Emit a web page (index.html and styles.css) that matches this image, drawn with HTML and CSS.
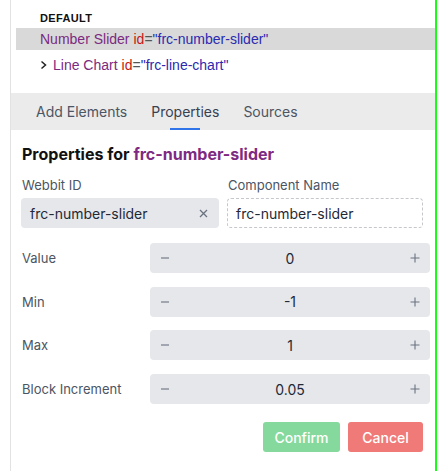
FILE: index.html
```html
<!DOCTYPE html>
<html>
<head>
<meta charset="utf-8">
<link rel="stylesheet" href="styles.css">
</head>
<body>
<div class="frame">
  <div class="panel">
    <div class="tree">
      <div class="tree-row cut"><span class="tag">Root Layout</span> <span class="attr">id</span><span class="eq">=</span><span class="val">"grid"</span></div>
      <div class="tree-heading">DEFAULT</div>
      <div class="tree-row selected"><span class="tag">Number Slider</span> <span class="attr">id</span><span class="eq">=</span><span class="val">"frc-number-slider"</span></div>
      <div class="tree-row child"><svg class="chev" width="8" height="10" viewBox="0 0 8 10"><path d="M1.5 1.5 L5.5 5 L1.5 8.5" fill="none" stroke="#222" stroke-width="1.5"/></svg><span class="tag">Line Chart</span> <span class="attr">id</span><span class="eq">=</span><span class="val">"frc-line-chart"</span></div>
    </div>

    <div class="tabs">
      <div class="tab">Add Elements</div>
      <div class="tab active">Properties</div>
      <div class="tab">Sources</div>
    </div>

    <div class="content">
      <h2 class="title">Properties for <span class="title-name">frc-number-slider</span></h2>

      <div class="id-grid">
        <div class="field">
          <label class="label">Webbit ID</label>
          <div class="input filled"><span>frc-number-slider</span><svg class="clear" width="9" height="9" viewBox="0 0 9 9"><path d="M1 1 L8 8 M8 1 L1 8" stroke="#6b7280" stroke-width="1.3" fill="none"/></svg></div>
        </div>
        <div class="field">
          <label class="label">Component Name</label>
          <div class="input dashed"><span>frc-number-slider</span></div>
        </div>
      </div>

      <div class="props">
        <div class="prop-label">Value</div>
        <div class="stepper"><svg class="btn" width="10" height="10" viewBox="0 0 10 10"><path d="M1 5 H9" stroke="#6b7280" stroke-width="1.1"/></svg><span class="num">0</span><svg class="btn" width="10" height="10" viewBox="0 0 10 10"><path d="M0.5 5 H9.5 M5 0.5 V9.5" stroke="#6b7280" stroke-width="1.1"/></svg></div>
        <div class="prop-label">Min</div>
        <div class="stepper"><svg class="btn" width="10" height="10" viewBox="0 0 10 10"><path d="M1 5 H9" stroke="#6b7280" stroke-width="1.1"/></svg><span class="num">-1</span><svg class="btn" width="10" height="10" viewBox="0 0 10 10"><path d="M0.5 5 H9.5 M5 0.5 V9.5" stroke="#6b7280" stroke-width="1.1"/></svg></div>
        <div class="prop-label">Max</div>
        <div class="stepper"><svg class="btn" width="10" height="10" viewBox="0 0 10 10"><path d="M1 5 H9" stroke="#6b7280" stroke-width="1.1"/></svg><span class="num">1</span><svg class="btn" width="10" height="10" viewBox="0 0 10 10"><path d="M0.5 5 H9.5 M5 0.5 V9.5" stroke="#6b7280" stroke-width="1.1"/></svg></div>
        <div class="prop-label">Block Increment</div>
        <div class="stepper"><svg class="btn" width="10" height="10" viewBox="0 0 10 10"><path d="M1 5 H9" stroke="#6b7280" stroke-width="1.1"/></svg><span class="num">0.05</span><svg class="btn" width="10" height="10" viewBox="0 0 10 10"><path d="M0.5 5 H9.5 M5 0.5 V9.5" stroke="#6b7280" stroke-width="1.1"/></svg></div>
      </div>

      <div class="actions">
        <button class="action confirm">Confirm</button>
        <button class="action cancel">Cancel</button>
      </div>
    </div>
  </div>
  <div class="edge"></div>
</div>
</body>
</html>
```

FILE: styles.css
```css
* { box-sizing: border-box; }
html, body {
  margin: 0;
  padding: 0;
  background: #fff;
}
body {
  width: 437px;
  height: 471px;
  overflow: hidden;
  font-family: Inter, "Liberation Sans", sans-serif;
}
.frame {
  display: flex;
  height: 471px;
}
.panel {
  margin-left: 10px;
  width: 425px;
  border-left: 1px solid #e2e2e2;
  background: #fff;
  display: flex;
  flex-direction: column;
}
.edge {
  width: 2px;
  background: #14ff14;
}

/* tree */
.tree {
  margin-top: -19px;
  padding-left: 5px;
  padding-bottom: 17px;
  display: flex;
  flex-direction: column;
  gap: 2px;
  font-family: "Liberation Sans", Arial, sans-serif;
  font-size: 14px;
}
.tree-row {
  height: 22px;
  line-height: 22px;
  padding-left: 24px;
  white-space: nowrap;
  display: flex;
  align-items: center;
}
.tree-row.cut { overflow: hidden; }
.tree-row.selected { background: #d9d9d9; }
.tree-row.child { margin-top: 2px; }
.tree-heading {
  margin-top: 5px;
  padding-left: 24px;
  height: 16px;
  line-height: 16px;
  font-size: 11px;
  font-weight: bold;
  letter-spacing: 0.35px;
  color: #111;
}
.chev { margin-right: 5px; }
.tag { color: #7b2a80; white-space: pre; }
.attr { color: #c41a16; margin-left: 4px; }
.eq { color: #555; }
.val { color: #2a2ab0; }

/* tabs */
.tabs {
  display: flex;
  height: 37px;
  background: #ebebeb;
  padding-left: 13px;
}
.tab {
  position: relative;
  padding: 0 12px;
  line-height: 37px;
  font-size: 14px;
  color: #4b5563;
}
.tab.active { color: #374151; }
.tab.active::after {
  content: "";
  position: absolute;
  left: 50%;
  bottom: 0;
  width: 30px;
  height: 2px;
  margin-left: -15px;
  background: #2f74e8;
}

/* content */
.content {
  padding: 14px 0 0 10px;
}
.title {
  margin: 0 0 13px 1px;
  font-size: 16px;
  line-height: 20px;
  font-weight: 700;
  color: #111;
}
.title-name { color: #7e2a82; }

.id-grid {
  display: grid;
  grid-template-columns: 198px 196px;
  column-gap: 8px;
}
.field {
  display: flex;
  flex-direction: column;
  gap: 5px;
}
.label {
  padding-left: 1px;
  font-size: 13px;
  line-height: 16px;
  color: #4b5563;
}
.input {
  height: 30px;
  display: flex;
  align-items: center;
  justify-content: space-between;
  padding: 0 11px 0 9px;
  font-size: 14px;
  color: #1f2937;
  border-radius: 4px;
}
.input.filled { background: #e5e7eb; }
.input.dashed {
  border: 1px dashed #c4c7cc;
  padding-left: 8px;
}

.props {
  margin-top: 15px;
  display: grid;
  grid-template-columns: 129px 280px;
  row-gap: 13.7px;
  align-items: center;
}
.prop-label {
  padding-left: 1px;
  font-size: 13px;
  color: #4b5563;
}
.stepper {
  height: 30px;
  background: #e5e7eb;
  border-radius: 4px;
  display: flex;
  align-items: center;
  justify-content: space-between;
  padding: 0 10px 0 10px;
  font-size: 14px;
  color: #1f2937;
}
.stepper .num { flex: 1; text-align: center; }

.actions {
  margin-top: 18px;
  display: flex;
  justify-content: flex-end;
  gap: 8px;
  width: 402px;
}
.action {
  height: 30px;
  border: none;
  border-radius: 3px;
  color: #fff;
  font-family: Inter, "Liberation Sans", sans-serif;
  font-size: 14px;
  font-weight: 500;
}
.confirm { width: 77px; background: #85d99d; }
.cancel { width: 75px; background: #ef7a77; }
```
